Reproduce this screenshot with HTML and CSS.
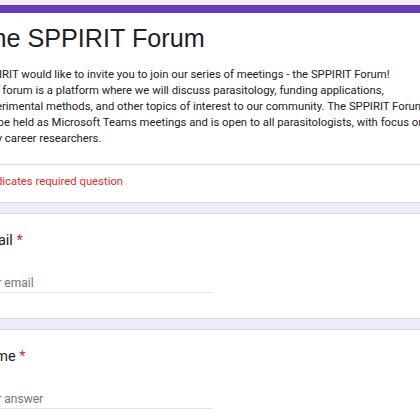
FILE: index.html
```html
<html>

<head>
  <title>The SPPIRIT Forum</title>
  <link rel="stylesheet" href="styles.css">
</head>

<body>
  <div class="form">
    <div class="card head">
      <h1 class="title">The SPPIRIT Forum</h1>
      <div class="desc">
        SPPIRIT would like to invite you to join our series of meetings - the SPPIRIT Forum!<br>
        This forum is a platform where we will discuss parasitology, funding applications,<br>
        experimental methods, and other topics of interest to our community. The SPPIRIT Forum<br>
        will be held as Microsoft Teams meetings and is open to all parasitologists, with focus on<br>
        early career researchers.
      </div>
      <div class="req">* Indicates required question</div>
    </div>

    <div class="card q">
      <div class="label">Email <span class="star">*</span></div>
      <input type="text" class="answer" placeholder="Your email">
    </div>

    <div class="card q">
      <div class="label">Name <span class="star">*</span></div>
      <input type="text" class="answer" placeholder="Your answer">
    </div>
  </div>
</body>

</html>
```

FILE: styles.css
```css
html, body {
  margin: 0;
  overflow: hidden;
}

body {
  background: #f0ebf8;
  font-family: Roboto, "Noto Sans", sans-serif;
  color: #202124;
}

.form {
  width: 640px;
  margin-left: -48px;
  padding-top: 5px;
  display: flex;
  flex-direction: column;
  gap: 10px;
}

.card {
  background: #fff;
  border: 1px solid #dadce0;
  border-radius: 8px;
  padding: 0 24px;
}

.head {
  border-top: 8px solid #673ab7;
  padding: 0;
}

.title {
  margin: 0;
  padding: 8px 24px 0;
  font-family: "Liberation Sans", Arial, sans-serif;
  font-weight: normal;
  font-size: 25.2px;
  line-height: 34px;
}

.desc {
  margin-top: 12px;
  padding: 0 24px 17px 25px;
  font-size: 11.3px;
  line-height: 16px;
  border-bottom: 1px solid #dadce0;
}

.req {
  padding: 7px 24px 10px 26px;
  color: #d93025;
  font-size: 11.3px;
  line-height: 20px;
}

.q {
  padding-top: 15px;
  padding-bottom: 25px;
}

.label {
  font-size: 14.5px;
  line-height: 24px;
}

.star {
  color: #d93025;
}

.answer {
  display: block;
  margin-top: 20px;
  width: 235px;
  border: none;
  border-bottom: 1px solid #e0e0e0;
  padding: 0;
  font-family: Roboto, sans-serif;
  font-size: 12px;
  line-height: 20px;
  height: 20px;
  outline: none;
}

.answer::placeholder {
  color: #70757a;
}
```
